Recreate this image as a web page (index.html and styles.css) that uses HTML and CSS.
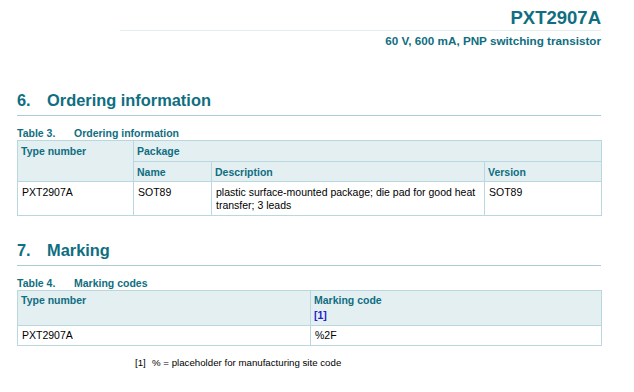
FILE: index.html
```html
<!DOCTYPE html>
<html lang="en">
<head>
<meta charset="utf-8">
<title>PXT2907A</title>
<link rel="stylesheet" href="styles.css">
</head>
<body>
<div class="page">
  <header class="doc-head">
    <div class="doc-title">PXT2907A</div>
    <div class="doc-rule"></div>
    <div class="doc-sub">60 V, 600 mA, PNP switching transistor</div>
  </header>

  <section class="sec sec-order">
    <h2 class="sec-h"><span class="sec-num">6.</span>Ordering information</h2>
    <div class="cap"><span class="cap-num">Table 3.</span>Ordering information</div>
    <table class="tbl tbl-order">
      <colgroup>
        <col class="c116"><col class="c78"><col class="c273"><col>
      </colgroup>
      <tr class="hrow1">
        <th rowspan="2">Type number</th>
        <th colspan="3">Package</th>
      </tr>
      <tr class="hrow2">
        <th>Name</th>
        <th>Description</th>
        <th>Version</th>
      </tr>
      <tr class="brow">
        <td>PXT2907A</td>
        <td>SOT89</td>
        <td>plastic surface-mounted package; die pad for good heat transfer; 3 leads</td>
        <td>SOT89</td>
      </tr>
    </table>
  </section>

  <section class="sec sec-mark">
    <h2 class="sec-h"><span class="sec-num">7.</span>Marking</h2>
    <div class="cap"><span class="cap-num">Table 4.</span>Marking codes</div>
    <table class="tbl tbl-mark">
      <colgroup>
        <col class="c293"><col>
      </colgroup>
      <tr class="hrow-mark">
        <th>Type number</th>
        <th>Marking code<br><span class="ref">[1]</span></th>
      </tr>
      <tr class="brow-mark">
        <td>PXT2907A</td>
        <td>%2F</td>
      </tr>
    </table>
    <div class="fn"><span class="fn-num">[1]</span>% = placeholder for manufacturing site code</div>
  </section>
</div>
</body>
</html>
```

FILE: styles.css
```css
html, body {
  margin: 0;
  padding: 0;
  background: #ffffff;
}

body {
  font-family: "Liberation Sans", Arial, sans-serif;
  color: #000000;
}

.page {
  width: 584px;
  padding: 7px 0 0 17px;
}

.doc-head {
  display: flex;
  flex-direction: column;
  align-items: flex-end;
}

.doc-title {
  font-size: 18.5px;
  line-height: 22px;
  font-weight: bold;
  color: #0f6e81;
}

.doc-rule {
  align-self: flex-end;
  width: 481px;
  height: 1px;
  background: #e3eef1;
  margin-top: 1px;
}

.doc-sub {
  margin-top: 3px;
  font-size: 11.7px;
  line-height: 14px;
  font-weight: bold;
  color: #0f6e81;
}

.sec-h {
  margin: 0;
  font-size: 16.4px;
  line-height: 20px;
  font-weight: bold;
  color: #0f6e81;
  padding-bottom: 5px;
  border-bottom: 1px solid #a9cdd7;
}

.sec-order .sec-h {
  margin-top: 42px;
}

.sec-mark .sec-h {
  margin-top: 24px;
}

.sec-num {
  display: inline-block;
  width: 30px;
}

.cap {
  margin-top: 11px;
  font-size: 10.5px;
  line-height: 13px;
  font-weight: bold;
  color: #0f6e81;
}

.cap-num {
  display: inline-block;
  width: 57px;
}

.tbl {
  width: 585px;
  border-collapse: collapse;
  table-layout: fixed;
  margin-top: 0;
  font-size: 10.5px;
  line-height: 12.5px;
}

.c116 { width: 116px; }
.c78 { width: 78px; }
.c273 { width: 273px; }
.c293 { width: 293px; }

.tbl th,
.tbl td {
  border: 1px solid #b9d7df;
  text-align: left;
  vertical-align: top;
  padding: 3px 3px 3px 3px;
}

.tbl th {
  background: #e4eff2;
  color: #0f6e81;
  font-weight: bold;
}

.tbl td {
  color: #000000;
  font-weight: normal;
  padding-left: 4px;
}

.hrow1 th { height: 12px; padding-top: 4px; }
.hrow2 th { height: 11px; padding-top: 4px; }
.brow td { height: 26px; padding-top: 4px; }

.hrow-mark th {
  height: 29px;
  line-height: 14.5px;
  padding-top: 2px;
}

.brow-mark td {
  height: 12px;
  padding-top: 3px;
}

.ref {
  color: #2222cc;
}

.fn {
  margin-top: 11px;
  padding-left: 118px;
  font-size: 9.7px;
  line-height: 12px;
  color: #000000;
}

.fn-num {
  display: inline-block;
  width: 17px;
}
```
